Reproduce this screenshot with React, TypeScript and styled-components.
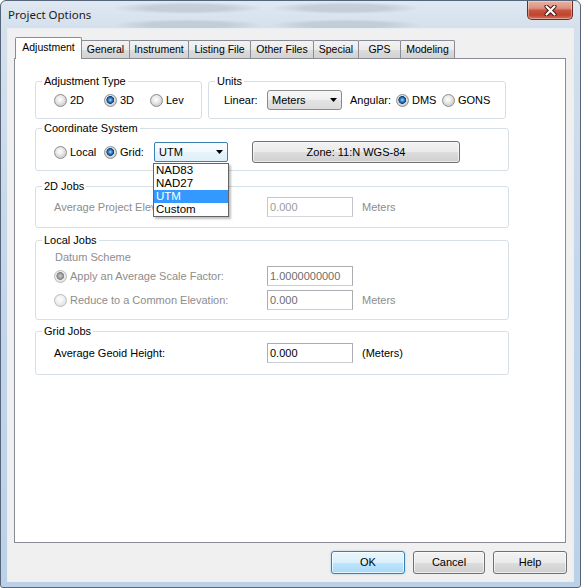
import React from "react";
import styled, { createGlobalStyle, css } from "styled-components";

const GlobalStyle = createGlobalStyle`
  html, body {
    margin: 0;
    padding: 0;
    background: #fff;
  }
  body {
    font-family: "Liberation Sans", Arial, sans-serif;
    font-size: 11px;
    color: #000;
  }
`;

const Window = styled.div`
  box-sizing: border-box;
  width: 581px;
  height: 588px;
  display: flex;
  flex-direction: column;
  border: 1px solid #56667a;
  border-radius: 6px 6px 3px 3px;
  background: linear-gradient(180deg, #e0e8f1 0, #d4e0ec 28px, #c2d5ea 50%, #bcd1e8 100%);
  overflow: hidden;
`;

const TitleBar = styled.div`
  height: 27px;
  display: flex;
  align-items: flex-start;
  padding: 0 7px 0 7px;
  background:
    radial-gradient(closest-side, rgba(50, 60, 80, 0.14) 55%, rgba(50, 60, 80, 0)) 112px 1px / 150px 12px no-repeat,
    radial-gradient(closest-side, rgba(50, 60, 80, 0.14) 55%, rgba(50, 60, 80, 0)) 270px 1px / 150px 12px no-repeat,
    radial-gradient(closest-side, rgba(50, 60, 80, 0.12) 55%, rgba(50, 60, 80, 0)) 112px 18px / 150px 12px no-repeat,
    radial-gradient(closest-side, rgba(50, 60, 80, 0.12) 55%, rgba(50, 60, 80, 0)) 270px 18px / 150px 12px no-repeat;
`;

const Title = styled.div`
  flex: 1;
  margin-top: 7px;
  font-family: "Noto Sans", "Open Sans", sans-serif;
  font-size: 11.5px;
  line-height: 14px;
  color: #1b1b1b;
`;

const CloseButton = styled.div`
  box-sizing: border-box;
  width: 46px;
  height: 19px;
  border: 1px solid #6e2b22;
  border-top: none;
  border-radius: 0 0 5px 5px;
  background: linear-gradient(180deg, #eab0a3 0%, #dc9280 40%, #c8553f 52%, #c0432d 78%, #d77660 100%);
  box-shadow: inset 0 0 0 1px rgba(255, 255, 255, 0.35);
  display: flex;
  align-items: center;
  justify-content: center;
`;

const Client = styled.div`
  flex: 1;
  margin: 0 6px 5px;
  border: 1px solid #e8eef6;
  background: #f0f0f0;
  display: flex;
  flex-direction: column;
`;

const TabRow = styled.div`
  position: relative;
  z-index: 1;
  display: flex;
  align-items: flex-end;
  padding: 8px 0 0 7px;
`;

const Tab = styled.div<{ $w: number; $active?: boolean }>`
  box-sizing: border-box;
  width: ${(p) => p.$w}px;
  height: 18px;
  margin-left: -1px;
  border: 1px solid #898c95;
  border-bottom: none;
  border-radius: 2px 2px 0 0;
  background: linear-gradient(180deg, #f3f3f3 0%, #ebebeb 50%, #dddddd 51%, #d2d2d2 100%);
  font-size: 10.5px;
  text-align: center;
  line-height: 17px;
  white-space: nowrap;
  &:first-child {
    margin-left: 0;
  }
  ${(p) =>
    p.$active &&
    css`
      position: relative;
      z-index: 2;
      height: 22px;
      margin-bottom: -1px;
      background: #fff;
      line-height: 18px;
    `}
`;

const Panel = styled.div`
  box-sizing: border-box;
  height: 485px;
  margin: 0 7px 0 6px;
  border: 1px solid #898c95;
  background: #fff;
  padding: 22px 0 0 20px;
  display: flex;
  flex-direction: column;
  align-items: flex-start;
`;

const GroupLine = styled.div`
  display: flex;
  gap: 6px;
`;

const Group = styled.div<{ $w: number; $pb: number; $mt?: number }>`
  box-sizing: border-box;
  width: ${(p) => p.$w}px;
  margin-top: ${(p) => p.$mt ?? 0}px;
  padding-bottom: ${(p) => p.$pb}px;
  border: 1px solid #d5dfe5;
  border-radius: 3px;
`;

const Caption = styled.div`
  width: fit-content;
  margin: -7px 0 0 6px;
  padding: 0 2px;
  background: #fff;
  line-height: 13px;
`;

const Row = styled.div<{ $mt?: number; $h?: number; $pl?: number }>`
  display: flex;
  align-items: center;
  height: ${(p) => p.$h ?? 20}px;
  margin-top: ${(p) => p.$mt ?? 0}px;
  padding-left: ${(p) => p.$pl ?? 18}px;
  white-space: nowrap;
`;

const Text = styled.span<{ $w?: number; $ml?: number; $dim?: boolean }>`
  flex: none;
  width: ${(p) => (p.$w ? `${p.$w}px` : "auto")};
  margin-left: ${(p) => p.$ml ?? 0}px;
  color: ${(p) => (p.$dim ? "#8d8d8d" : "#000")};
  line-height: 13px;
`;

const RadioItem = styled.label<{ $w?: number; $dim?: boolean }>`
  flex: none;
  display: flex;
  align-items: center;
  gap: 3px;
  width: ${(p) => (p.$w ? `${p.$w}px` : "auto")};
  color: ${(p) => (p.$dim ? "#8d8d8d" : "#000")};
  line-height: 13px;
`;

const RadioDot = styled.span<{ $checked?: boolean; $dim?: boolean }>`
  box-sizing: border-box;
  flex: none;
  width: 13px;
  height: 13px;
  border-radius: 50%;
  border: 1px solid ${(p) => (p.$dim ? "#bcbcbc" : "#8e8f8f")};
  background: ${(p) => {
    const base = p.$dim
      ? "radial-gradient(circle at 45% 40%, #ffffff 0, #f1f1f1 40%, #e0e0e0 75%, #f0f0f0 100%)"
      : "radial-gradient(circle at 45% 40%, #ffffff 0, #ececec 35%, #cdcdcd 72%, #e8e8e8 100%)";
    if (!p.$checked) return base;
    const dot = p.$dim
      ? "radial-gradient(circle at 48% 45%, #d6d6d6 0, #a9a9a9 1.6px, #8e8e8e 3px, #868686 3.6px, rgba(0,0,0,0) 4.2px)"
      : "radial-gradient(circle at 48% 45%, #b5e1ff 0, #3f8fd6 1.6px, #1b5596 3px, #113f75 3.6px, rgba(0,0,0,0) 4.2px)";
    return `${dot}, ${base}`;
  }};
`;

const Select = styled.div<{ $w: number; $open?: boolean }>`
  position: relative;
  box-sizing: border-box;
  flex: none;
  width: ${(p) => p.$w}px;
  height: 20px;
  padding: 0 4px 0 4px;
  display: flex;
  align-items: center;
  justify-content: space-between;
  border: 1px solid #8a8a8a;
  border-radius: 3px;
  background: linear-gradient(180deg, #f7f7f7 0%, #efefef 50%, #e3e3e3 51%, #dcdcdc 100%);
  line-height: 13px;
  ${(p) =>
    p.$open &&
    css`
      border-color: #3c7fb1;
      border-radius: 2px;
      background: linear-gradient(180deg, #fbfdff 0%, #f1f8fd 50%, #e7f3fb 51%, #def0fa 100%);
    `}
`;

const DropList = styled.div`
  position: absolute;
  z-index: 10;
  top: 20px;
  left: -2px;
  box-sizing: border-box;
  width: 76px;
  border: 1px solid #646464;
  background: #fff;
  box-shadow: 2px 2px 2px rgba(0, 0, 0, 0.25);
`;

const DropItem = styled.div<{ $selected?: boolean }>`
  height: 13px;
  overflow: hidden;
  padding-left: 2px;
  font-size: 11.5px;
  line-height: 13px;
  color: ${(p) => (p.$selected ? "#fff" : "#000")};
  background: ${(p) => (p.$selected ? "#3399ff" : "transparent")};
`;

const Button = styled.div<{ $w: number; $h?: number; $ml?: number; $default?: boolean }>`
  box-sizing: border-box;
  flex: none;
  width: ${(p) => p.$w}px;
  height: ${(p) => p.$h ?? 23}px;
  margin-left: ${(p) => p.$ml ?? 0}px;
  display: flex;
  align-items: center;
  justify-content: center;
  border: 1px solid #707070;
  border-radius: 3px;
  background: linear-gradient(180deg, #f2f2f2 0%, #ebebeb 50%, #dddddd 51%, #cfcfcf 100%);
  box-shadow: inset 0 0 0 1px rgba(255, 255, 255, 0.6);
  line-height: 13px;
  ${(p) =>
    p.$default &&
    css`
      border-color: #3c7fb1;
      background: linear-gradient(180deg, #eaf6fd 0%, #d9f0fc 50%, #bee6fd 51%, #a7d9f5 100%);
      box-shadow: inset 0 0 0 1px rgba(255, 255, 255, 0.7), 0 0 2px rgba(60, 160, 230, 0.5);
    `}
`;

const TextBox = styled.div<{ $tone?: "normal" | "dim" | "faint" }>`
  box-sizing: border-box;
  flex: none;
  width: 86px;
  height: 20px;
  padding-left: 2px;
  border: 1px solid ${(p) => (p.$tone === "faint" ? "#c4c6ca" : "#abadb3")};
  border-bottom-color: ${(p) => (p.$tone === "faint" ? "#d6d8db" : "#c9ccd1")};
  background: #fff;
  line-height: 18px;
  color: ${(p) => (p.$tone === "faint" ? "#9b9b9b" : p.$tone === "dim" ? "#6d6d6d" : "#000")};
`;

const ButtonRow = styled.div`
  display: flex;
  justify-content: flex-end;
  gap: 8px;
  margin-top: 8px;
  padding-right: 6px;
`;

function Arrow() {
  return (
    <svg width="7" height="4" viewBox="0 0 7 4">
      <polygon points="0,0 7,0 3.5,4" fill="#000" />
    </svg>
  );
}

function Radio(props: { label: string; w?: number; checked?: boolean; dim?: boolean }) {
  return (
    <RadioItem $w={props.w} $dim={props.dim}>
      <RadioDot $checked={props.checked} $dim={props.dim} />
      {props.label}
    </RadioItem>
  );
}

const tabs = [
  { label: "Adjustment", w: 67, active: true },
  { label: "General", w: 49 },
  { label: "Instrument", w: 60 },
  { label: "Listing File", w: 63 },
  { label: "Other Files", w: 64 },
  { label: "Special", w: 46 },
  { label: "GPS", w: 43 },
  { label: "Modeling", w: 55 },
];

const grids = ["NAD83", "NAD27", "UTM", "Custom"];

export default function App() {
  return (
    <>
      <GlobalStyle />
      <Window>
        <TitleBar>
          <Title>Project Options</Title>
          <CloseButton>
            <svg width="13" height="11" viewBox="0 0 13 11">
              <path d="M2.5 1.5 L10.5 9.5 M10.5 1.5 L2.5 9.5" stroke="#3a1510" strokeWidth="4" strokeLinecap="round" />
              <path d="M2.5 1.5 L10.5 9.5 M10.5 1.5 L2.5 9.5" stroke="#fff" strokeWidth="2.2" strokeLinecap="round" />
            </svg>
          </CloseButton>
        </TitleBar>
        <Client>
          <TabRow>
            {tabs.map((t) => (
              <Tab key={t.label} $w={t.w} $active={t.active}>
                {t.label}
              </Tab>
            ))}
          </TabRow>
          <Panel>
            <GroupLine>
              <Group $w={167} $pb={8}>
                <Caption>Adjustment Type</Caption>
                <Row $mt={2}>
                  <Radio label="2D" w={50} />
                  <Radio label="3D" w={46} checked />
                  <Radio label="Lev" />
                </Row>
              </Group>
              <Group $w={298} $pb={8}>
                <Caption>Units</Caption>
                <Row $mt={2} $pl={15}>
                  <Text $w={43}>Linear:</Text>
                  <Select $w={75}>
                    Meters
                    <Arrow />
                  </Select>
                  <Text $w={46} $ml={8}>
                    Angular:
                  </Text>
                  <Radio label="DMS" w={46} checked />
                  <Radio label="GONS" />
                </Row>
              </Group>
            </GroupLine>

            <Group $w={474} $pb={7} $mt={9}>
              <Caption>Coordinate System</Caption>
              <Row $mt={6} $h={22}>
                <Radio label="Local" w={50} />
                <Radio label="Grid:" w={50} checked />
                <Select $w={74} $open>
                  UTM
                  <Arrow />
                  <DropList>
                    {grids.map((g) => (
                      <DropItem key={g} $selected={g === "UTM"}>
                        {g}
                      </DropItem>
                    ))}
                  </DropList>
                </Select>
                <Button $w={208} $h={22} $ml={24}>
                  Zone: 11:N WGS-84
                </Button>
              </Row>
            </Group>

            <Group $w={474} $pb={10} $mt={15}>
              <Caption>2D Jobs</Caption>
              <Row $mt={4}>
                <Text $w={213} $dim>
                  Average Project Elevation:
                </Text>
                <TextBox $tone="faint">0.000</TextBox>
                <Text $ml={9} $dim>
                  Meters
                </Text>
              </Row>
            </Group>

            <Group $w={474} $pb={9} $mt={12}>
              <Caption>Local Jobs</Caption>
              <Row $mt={4} $h={13} $pl={19}>
                <Text $dim>Datum Scheme</Text>
              </Row>
              <Row $mt={2}>
                <RadioItem $w={213} $dim>
                  <RadioDot $checked $dim />
                  Apply an Average Scale Factor:
                </RadioItem>
                <TextBox $tone="dim">1.0000000000</TextBox>
              </Row>
              <Row $mt={4}>
                <RadioItem $w={213} $dim>
                  <RadioDot $dim />
                  Reduce to a Common Elevation:
                </RadioItem>
                <TextBox $tone="dim">0.000</TextBox>
                <Text $ml={9} $dim>
                  Meters
                </Text>
              </Row>
            </Group>

            <Group $w={474} $pb={11} $mt={11}>
              <Caption>Grid Jobs</Caption>
              <Row $mt={5}>
                <Text $w={213}>Average Geoid Height:</Text>
                <TextBox>0.000</TextBox>
                <Text $ml={9}>(Meters)</Text>
              </Row>
            </Group>
          </Panel>
          <ButtonRow>
            <Button $w={74} $default>
              OK
            </Button>
            <Button $w={72}>Cancel</Button>
            <Button $w={74}>Help</Button>
          </ButtonRow>
        </Client>
      </Window>
    </>
  );
}
